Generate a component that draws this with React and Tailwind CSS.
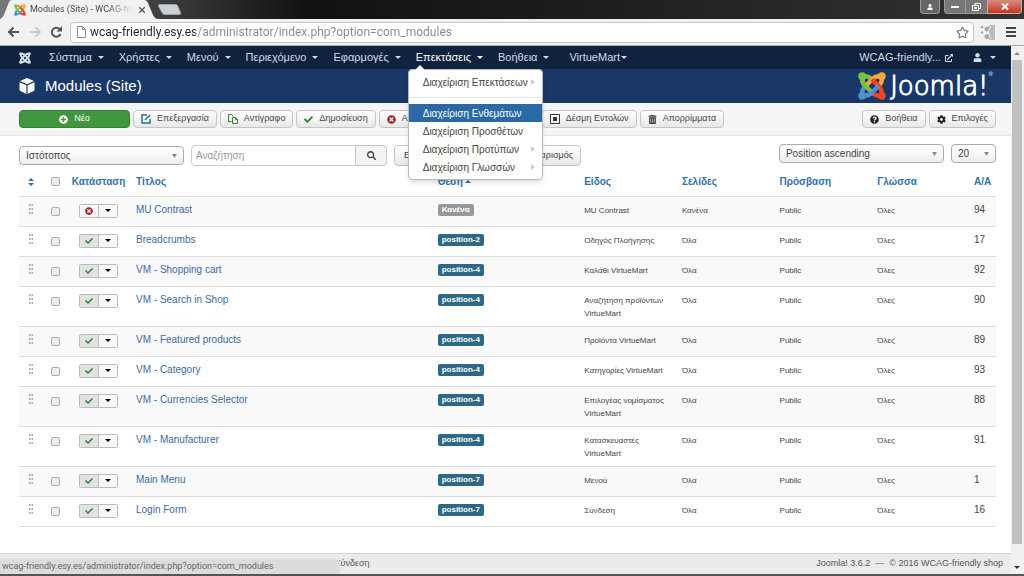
import React from "react";
import { FaUser, FaCog, FaQuestionCircle, FaCheck, FaSearch, FaPlusCircle, FaTimesCircle, FaRegStar, FaExternalLinkAlt, FaTrashAlt } from "react-icons/fa";

const modules = [
  ["MU Contrast", "Κανένα", "MU Contrast", "Κανένα", 94],
  ["Breadcrumbs", "position-2", "Οδηγός Πλοήγησης", "Όλα", 17],
  ["VM - Shopping cart", "position-4", "Καλάθι VirtueMart", "Όλα", 92],
  ["VM - Search in Shop", "position-4", "Αναζήτηση προϊόντων VirtueMart", "Όλα", 90],
  ["VM - Featured products", "position-4", "Προϊόντα VirtueMart", "Όλα", 89],
  ["VM - Category", "position-4", "Κατηγορίες VirtueMart", "Όλα", 93],
  ["VM - Currencies Selector", "position-4", "Επιλογέας νομίσματος VirtueMart", "Όλα", 88],
  ["VM - Manufacturer", "position-4", "Κατασκευαστές VirtueMart", "Όλα", 91],
  ["Main Menu", "position-7", "Μενού", "Όλα", 1],
  ["Login Form", "position-7", "Σύνδεση", "Όλα", 16],
];

const Caret = ({ className = "" }) => (
  <svg viewBox="0 0 6 3" className={"h-[3px] w-[6px] shrink-0 fill-current " + className} aria-hidden="true"><path d="M0 0h6L3 3z" /></svg>
);

function JoomlaMark({ mono, className }) {
  const c = mono ? ["#d5dbe5", "#d5dbe5", "#d5dbe5", "#d5dbe5"] : ["#7ac143", "#f9a541", "#f44321", "#5091cd"];
  return (
    <svg viewBox="0 0 28 28" className={className} fill="none" strokeWidth="4.500" aria-hidden="true">
      {c.map((color, i) => (
        <g key={color + i} transform={`rotate(${i * 90} 14 14)`} stroke={color}>
          <path d="M4.500 4.500C3.500 9 5 11.500 7 13.500L14 20.500" />
          <path d="M4.500 4.500C9 3.500 11.500 5 13 6.500" />
          <circle cx="4.200" cy="4.200" r="3.900" fill={color} stroke="none" />
        </g>
      ))}
      {!mono && <path d="M4.500 4.500C3.500 9 5 11.500 7 13.500L10 16.500" stroke="#7ac143" />}
    </svg>
  );
}

function Button({ icon, children, className = "" }) {
  return (
    <button className={"flex h-[18px] items-center gap-1.5 whitespace-nowrap rounded-sm border border-[#c4c4c4] bg-linear-to-b from-white to-[#e8e8e8] px-[7px] text-[9px] text-[#444] " + className}>
      {icon}{children}
    </button>
  );
}

function NavItem({ children, active, caret = "ml-1.5", className = "" }) {
  return (
    <a href="#" className={"flex items-center whitespace-nowrap " + (active ? "text-white " : "text-[#d5dbe5] ") + className}>
      {children}<Caret className={caret} />
    </a>
  );
}

function Select({ label, value, className }) {
  return (
    <div className={"relative " + className}>
      <select aria-label={label} defaultValue={value} className="h-[19px] w-full appearance-none rounded border border-[#aaa] bg-linear-to-b from-white to-[#eee] px-1.5 text-[10px] leading-none text-[#444]">
        <option>{value}</option>
      </select>
      <svg viewBox="0 0 6 5" className="pointer-events-none absolute right-[7px] top-[8px] h-[4px] w-[5px] fill-[#888]" aria-hidden="true"><path d="M0 0h6L3 5z" /></svg>
    </div>
  );
}

function ExtensionsMenu() {
  const item = "flex h-[18px] items-center justify-between pl-[14px] pr-[7px] whitespace-nowrap";
  const arrow = <svg viewBox="0 0 4 6" className="h-[6px] w-[4px] fill-[#ccc]" aria-hidden="true"><path d="M0 0l4 3-4 3z" /></svg>;
  return (
    <div className="absolute left-[-8px] top-[20px] z-20 w-[135px] rounded border border-[#bbb] bg-white py-[3px] text-[10px] text-[#444] shadow-md">
      <svg viewBox="0 0 12 6" className="absolute left-[5px] top-[-5px] h-[6px] w-[12px] fill-white" aria-hidden="true"><path d="M6 0l6 6H0z" /></svg>
      <a href="#" className={item}>Διαχείριση Επεκτάσεων{arrow}</a>
      <hr className="my-1.5 border-[#e5e5e5]" />
      <a href="#" className={item + " bg-[#2a69a6] text-white"}>Διαχείριση Ενθεμάτων</a>
      <a href="#" className={item}>Διαχείριση Προσθέτων</a>
      <a href="#" className={item}>Διαχείριση Προτύπων{arrow}</a>
      <a href="#" className={item}>Διαχείριση Γλωσσών{arrow}</a>
    </div>
  );
}

function Browser() {
  return (
    <header className="shrink-0">
      <div className="flex h-[19px] items-end justify-between bg-linear-to-r from-[#777] via-[#111] via-30% to-[#333]">
        <div className="flex items-end">
          <div className="relative flex h-[19px] w-[158px] items-center pl-[14px] text-[9px] text-[#444]">
            <svg viewBox="0 0 158 19" className="absolute inset-0 h-full w-full fill-[#f1f1f1]" aria-hidden="true"><path d="M0 19Q3 18 5 12L9 2Q10 0 12 0H144Q147 0 148 3L153 15Q155 19 158 19z" /></svg>
            <JoomlaMark className="relative mr-1 h-3 w-3" />
            <span className="relative w-[104px] overflow-hidden whitespace-nowrap bg-linear-to-r from-[#444] from-75% to-transparent bg-clip-text font-['Roboto'] text-transparent">Modules (Site) - WCAG-fri</span>
            <button aria-label="Close tab" className="relative ml-[5px]"><svg viewBox="0 0 6 6" className="h-[6px] w-[6px] stroke-[#555]" aria-hidden="true"><path d="M0 0l6 6M6 0L0 6" strokeWidth="1.300" /></svg></button>
          </div>
          <button aria-label="New tab" className="mb-1"><svg viewBox="0 0 24 11" className="h-[11px] w-[24px]" aria-hidden="true"><path d="M2 0H17Q19 0 20 2L23 9Q23 11 21 11H7Q5 11 4 9L0 2Q0 0 2 0z" fill="#cbd0d4" stroke="#777" /></svg></button>
        </div>
        <div className="mr-0.5 flex h-[14px] self-start text-white">
          <button aria-label="Profile" className="mr-1 flex w-5 items-center justify-center rounded-b border border-t-0 border-[#999] bg-[#666]"><FaUser size={6} /></button>
          <button aria-label="Minimize" className="flex w-[22px] items-center justify-center rounded-bl border border-t-0 border-[#999] bg-[#777]"><span className="h-0.5 w-2 bg-white" /></button>
          <button aria-label="Restore" className="flex w-[21px] items-center justify-center border-b border-[#999] bg-[#777]"><svg viewBox="0 0 9 8" className="h-2 w-[9px] fill-none stroke-white" aria-hidden="true"><path d="M3 2V.5h5.500v5H7M.5 2.500h6v5h-6zM2.500 4.500h2v1h-2z" /></svg></button>
          <button aria-label="Close" className="flex w-[35px] items-center justify-center rounded-br border border-t-0 border-[#daa] bg-linear-to-b from-[#d98b7d] to-[#c4301c]"><svg viewBox="0 0 8 7" className="h-[7px] w-2 stroke-white" aria-hidden="true"><path d="M1 .5l6 6M7 .5l-6 6" strokeWidth="2" /></svg></button>
        </div>
      </div>
      <div className="flex h-[27px] items-center border-b border-[#aaa] bg-[#f1f1f1] px-2">
        <svg viewBox="0 0 58 12" className="h-3 w-[58px] fill-none" strokeWidth="2" aria-hidden="true">
          <path d="M11 6H1M5.500 1.500L1 6l4.500 4.500" stroke="#555" />
          <path d="M22 6h10M27.500 1.500L32 6l-4.500 4.500" stroke="#ccc" />
          <path d="M52 3.500A4.500 4.500 0 1 0 52.500 8" stroke="#555" />
          <path d="M54 0v5.500h-5.500z" fill="#555" />
        </svg>
        <div className="ml-1 flex h-[21px] grow items-center rounded-sm border border-[#c4c4c4] bg-white pl-[6px] pr-1">
          <svg viewBox="0 0 9 12" className="mr-1 h-3 w-[9px] fill-none stroke-[#888]" aria-hidden="true"><path d="M.5.5h5l3 3v8h-8zM5.500.5v3h3" /></svg>
          <input aria-label="Address" defaultValue="wcag-friendly.esy.es/administrator/index.php?option=com_modules" className="grow bg-linear-to-r from-[#222] from-[105px] to-[#888] to-[106px] bg-clip-text font-['Roboto'] text-[12px] text-transparent" />
          <button aria-label="Bookmark"><FaRegStar size={13} className="text-[#777]" /></button>
        </div>
        <svg viewBox="0 0 15 15" className="ml-[6px] h-[15px] w-[15px] fill-[#aaa]" aria-hidden="true"><path d="M9 0h6v15H9z" fill="#bbb" /><circle cx="7" cy="4" r="2.500" /><circle cx="7" cy="11.500" r="2.500" /><circle cx="2" cy="2" r="1.300" /><circle cx="2" cy="7.500" r="1.300" /><path d="M11 1l-3 6 3 7" stroke="#eee" fill="none" /></svg>
        <button aria-label="Menu" className="ml-[11px]"><svg viewBox="0 0 10 10" className="h-[10px] w-[10px] stroke-[#444]" aria-hidden="true"><path d="M0 1h10M0 5h10M0 9h10" strokeWidth="2" /></svg></button>
      </div>
    </header>
  );
}

export default function App() {
  return (
    <div className="relative flex h-screen flex-col overflow-hidden bg-white font-['Liberation_Sans',sans-serif] text-[10px] text-[#444]">
      <Browser />
      <div className="flex min-h-0 grow">
        <div className="flex min-w-0 grow flex-col">
          <nav className="flex h-[23px] shrink-0 items-center bg-[#10223e] pl-[19px] pr-[15px] text-[11px]">
            <JoomlaMark mono className="mr-[18px] h-3 w-3" />
            <div className="flex grow items-center gap-[15px]">
              <NavItem>Σύστημα</NavItem><NavItem>Χρήστες</NavItem><NavItem>Μενού</NavItem><NavItem>Περιεχόμενο</NavItem><NavItem>Εφαρμογές</NavItem>
              <div className="relative"><NavItem active>Επεκτάσεις</NavItem><ExtensionsMenu /></div>
              <NavItem>Βοήθεια</NavItem><NavItem caret="ml-px" className="ml-[5px]">VirtueMart</NavItem>
            </div>
            <a href="#" className="flex items-center gap-1 text-[#d5dbe5]">WCAG-friendly... <FaExternalLinkAlt size={8} /></a>
            <button aria-label="User menu" className="ml-5 flex items-center gap-2 text-[#d5dbe5]"><FaUser size={9} /><Caret /></button>
          </nav>
          <div className="flex h-[34px] shrink-0 items-center bg-[#1a3867] pl-[19px] pr-[18px] text-white">
            <svg viewBox="0 0 16 16" className="mr-[10px] h-4 w-4 fill-white" aria-hidden="true"><path d="M8 0l7 3-7 3.200L1 3zM.5 4.200L7.400 7.300V16L.5 12.600zM15.500 4.200L8.600 7.300V16l6.900-3.400z" /></svg>
            <h1 className="grow text-[15px]">Modules (Site)</h1>
            <JoomlaMark className="mr-1 h-7 w-7" />
            <span className="font-['DejaVu_Sans'] text-[26px] font-extralight leading-none [-webkit-text-stroke:1px_white]">Joomla!</span><sup className="self-start pt-2 text-[6px]">®</sup>
          </div>
          <div className="flex h-[33px] shrink-0 items-center gap-[3px] border-b border-[#e8e8e8] bg-[#f5f5f5] pl-[19px] pr-[15px]">
            <button className="flex h-[18px] w-[111px] items-center justify-center gap-1.5 rounded-sm border border-[#378137] bg-[#409740] text-[9px] text-white"><FaPlusCircle size={9} />Νέο</button>
            <Button icon={<svg viewBox="0 0 10 10" className="h-[10px] w-[10px] fill-none stroke-[#24748c]" strokeWidth="1.500" aria-hidden="true"><path d="M6 1H1v8h8V5M4 6l5-5" /></svg>}>Επεξεργασία</Button>
            <Button icon={<svg viewBox="0 0 10 10" className="h-[10px] w-[10px] fill-none stroke-[#378137]" aria-hidden="true"><path d="M3.500 7.500h-3v-7h3l2 2M4.500 3.500h3l2 2v4h-5zM7.500 3.500v2h2" /></svg>}>Αντίγραφο</Button>
            <Button className="px-2" icon={<FaCheck size={9} className="text-[#378137]" />}>Δημοσίευση</Button>
            <Button className="w-[160px]" icon={<FaTimesCircle size={9} className="text-[#a92420]" />}>Αποδημοσίευση</Button>
            <Button icon={<svg viewBox="0 0 10 10" className="h-[10px] w-[10px]" aria-hidden="true"><path d="M.5.5h9v9h-9z" fill="none" stroke="#333" /><path d="M3 3h4v4H3z" fill="#333" /></svg>}>Δέσμη Εντολών</Button>
            <Button className="px-2" icon={<FaTrashAlt size={9} />}>Απορρίμματα</Button>
            <span className="grow" />
            <Button icon={<FaQuestionCircle size={9} className="text-[#222]" />}>Βοήθεια</Button>
            <Button icon={<FaCog size={9} className="text-[#222]" />}>Επιλογές</Button>
          </div>
          <main className="min-h-0 grow pl-[19px] pr-[15px] pt-[7px]">
            <div className="flex items-start">
              <Select label="Site" value="Ιστότοπος" className="mt-[3px] w-[165px]" />
              <input aria-label="Αναζήτηση" placeholder="Αναζήτηση" className="ml-[7px] mt-[2px] h-[21px] w-[165px] rounded-l-sm border border-[#ccc] px-1 text-[10px] placeholder:text-[#999]" />
              <button aria-label="Search" className="-ml-px mt-[2px] flex h-[21px] w-8 items-center justify-center rounded-r-sm border border-[#c4c4c4] bg-[#f3f3f3]"><FaSearch size={9} /></button>
              <Button className="ml-[7px] mt-[2px] h-[21px] w-[108px] pl-[9px]">Εργαλεία</Button>
              <Button className="ml-1 mt-[2px] h-[21px] w-[75px] justify-end">Καθαρισμός</Button>
              <span className="grow" />
              <Select label="Order" value="Position ascending" className="mt-px w-[165px]" />
              <Select label="Limit" value="20" className="ml-[7px] mt-px w-[45px]" />
            </div>
            <table className="mt-[2px] w-full table-fixed border-b border-[#ddd] text-left">
              <colgroup><col className="w-[24px]" /><col className="w-[24px]" /><col className="w-[63px]" /><col /><col className="w-[15%]" /><col className="w-[10%]" /><col className="w-[10%]" /><col className="w-[10%]" /><col className="w-[10%]" /><col className="w-[27px]" /></colgroup>
              <thead>
                <tr className="h-[28px] whitespace-nowrap text-[#3071a9] *:font-bold">
                  <th><svg viewBox="0 0 6 8" className="mx-auto h-2 w-[6px] fill-current" aria-label="Order"><path d="M0 3l3-3 3 3zM0 5h6L3 8z" /></svg></th>
                  <th><input type="checkbox" aria-label="Select all" className="mx-auto block h-[9px] w-[9px] appearance-none rounded-xs border border-[#aaa] bg-[#eee]" /></th>
                  <th className="text-center">Κατάσταση</th><th className="px-[6px]">Τίτλος</th>
                  <th className="px-[6px]"><span className="flex items-center gap-0.5">Θέση<Caret className="rotate-180" /></span></th>
                  <th className="px-[6px]">Είδος</th><th className="px-[6px]">Σελίδες</th><th className="px-[6px]">Πρόσβαση</th><th className="px-[6px]">Γλώσσα</th><th className="pl-[5px]">Α/Α</th>
                </tr>
              </thead>
              <tbody>
                {modules.map(([title, position, type, pages, id], i) => (
                  <tr key={title} className="h-[30px] border-t border-[#ddd] align-top text-[8px] leading-[13px] odd:bg-[#f9f9f9]">
                    <td className="pt-[7px]"><svg viewBox="0 0 4 10" className="mx-auto h-[10px] w-1 fill-[#aaa]" aria-hidden="true"><path d="M0 0h1.500v2H0zM2.500 0H4v2H2.500zM0 4h1.500v2H0zM2.500 4H4v2H2.500zM0 8h1.500v2H0zM2.500 8H4v2H2.500z" /></svg></td>
                    <td className="pt-[10px]"><input type="checkbox" aria-label={title} className="mx-auto block h-[9px] w-[9px] appearance-none rounded-xs border border-[#aaa] bg-[#eee]" /></td>
                    <td className="pt-[7px]">
                      <div className="mx-auto flex h-[14px] w-[39px] rounded-xs border border-[#bbb]">
                        <button aria-label="Status" className={"flex w-[19px] items-center justify-center border-r border-[#bbb] " + (i ? "bg-[#e2e2e2]" : "bg-[#f7f7f7]")}>{i ? <FaCheck size={8} className="text-[#378137]" /> : <FaTimesCircle size={8} className="text-[#a92420]" />}</button>
                        <button aria-label="Actions" className="flex grow items-center justify-center bg-[#f7f7f7] text-black"><Caret /></button>
                      </div>
                    </td>
                    <td className="px-[6px] pt-[6px] text-[10px]"><a href="#" className="text-[#3c6a9e]">{title}</a></td>
                    <td className="px-[6px] pt-[7px]"><span className={"block h-3 w-fit rounded-xs px-1 font-bold leading-3 text-white " + (i ? "bg-[#2d6987]" : "bg-[#999]")}>{position}</span></td>
                    <td className="px-[6px] pb-[6px] pt-[7px]">{type}</td><td className="px-[6px] pt-[7px]">{pages}</td><td className="px-[6px] pt-[7px]">Public</td><td className="px-[6px] pt-[7px]">Όλες</td>
                    <td className="pl-[5px] pt-[6px] text-[10px]">{id}</td>
                  </tr>
                ))}
              </tbody>
            </table>
          </main>
          <footer className="flex h-[21px] shrink-0 items-center justify-between border-t border-[#d4d4d4] bg-[#ebebeb] pl-[335px] pr-[8px] text-[9px] text-[#555]">
            <a href="#">Σύνδεση</a><p>Joomla! 3.6.2 &nbsp;—&nbsp; © 2016 WCAG-friendly shop</p>
          </footer>
        </div>
        <div className="flex w-[13px] shrink-0 flex-col items-center justify-between bg-[#f1f1f1] py-1">
          <Caret className="mt-0.5 rotate-180 text-[#888]" /><div className="mb-[22px] mt-[5px] w-[10px] grow bg-[#c1c1c1]" /><Caret className="mb-px text-[#333]" />
        </div>
      </div>
      <div className="h-0.5 shrink-0 bg-[#555]" />
      <div className="absolute bottom-0.5 left-0 flex h-[15px] w-[340px] items-center rounded-tr bg-[#dcdcdc] px-0.5 font-['Roboto'] text-[9px] text-[#666]">wcag-friendly.esy.es/administrator/index.php?option=com_modules</div>
    </div>
  );
}
